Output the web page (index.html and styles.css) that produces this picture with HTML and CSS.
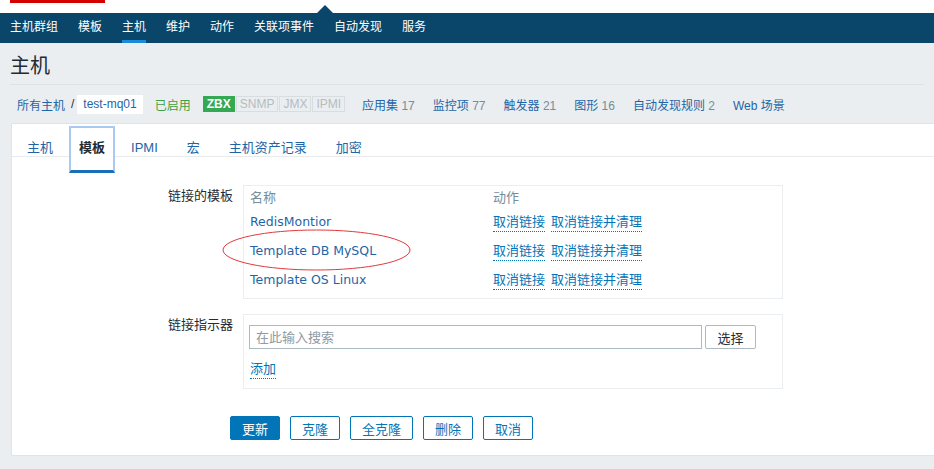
FILE: index.html
```html
<!DOCTYPE html>
<html lang="zh">
<head>
<meta charset="utf-8">
<title>主机</title>
<link rel="stylesheet" href="styles.css">
</head>
<body>
<div class="topstrip">
  <div class="logo-bar"></div>
  <span class="pointer"></span>
</div>
<nav class="nav">
  <a class="nav-item">主机群组</a>
  <a class="nav-item">模板</a>
  <a class="nav-item active">主机</a>
  <a class="nav-item">维护</a>
  <a class="nav-item">动作</a>
  <a class="nav-item">关联项事件</a>
  <a class="nav-item">自动发现</a>
  <a class="nav-item">服务</a>
</nav>
<header class="page-header"><h1>主机</h1></header>
<div class="crumbs">
  <a class="link">所有主机</a>
  <span class="sep">/</span>
  <span class="current">test-mq01</span>
  <span class="status-on">已启用</span>
  <span class="badges">
    <span class="badge on">ZBX</span>
    <span class="badge">SNMP</span>
    <span class="badge">JMX</span>
    <span class="badge">IPMI</span>
  </span>
  <span class="item first"><a class="link">应用集</a> <span class="count">17</span></span>
  <span class="item"><a class="link">监控项</a> <span class="count">77</span></span>
  <span class="item"><a class="link">触发器</a> <span class="count">21</span></span>
  <span class="item"><a class="link">图形</a> <span class="count">16</span></span>
  <span class="item"><a class="link">自动发现规则</a> <span class="count">2</span></span>
  <span class="item"><a class="link">Web 场景</a></span>
</div>
<main class="panel">
  <div class="tabs">
    <a class="tab">主机</a>
    <a class="tab active">模板</a>
    <a class="tab">IPMI</a>
    <a class="tab">宏</a>
    <a class="tab">主机资产记录</a>
    <a class="tab">加密</a>
  </div>
  <div class="form">
    <div class="label">链接的模板</div>
    <div class="box">
      <div class="thead">
        <span class="col-name">名称</span>
        <span class="col-act">动作</span>
      </div>
      <div class="trow">
        <span class="col-name"><a class="tname">RedisMontior</a></span>
        <span class="col-act"><a class="dlink">取消链接</a> <a class="dlink">取消链接并清理</a></span>
      </div>
      <div class="trow">
        <span class="col-name"><a class="tname">Template DB MySQL</a></span>
        <span class="col-act"><a class="dlink">取消链接</a> <a class="dlink">取消链接并清理</a></span>
      </div>
      <div class="trow">
        <span class="col-name"><a class="tname">Template OS Linux</a></span>
        <span class="col-act"><a class="dlink">取消链接</a> <a class="dlink">取消链接并清理</a></span>
      </div>
    </div>
    <div class="label">链接指示器</div>
    <div class="box box2">
      <div class="search-row">
        <input class="search" type="text" placeholder="在此输入搜索">
        <button class="btn-select" type="button">选择</button>
      </div>
      <a class="dlink add">添加</a>
    </div>
  </div>
  <div class="actions">
    <button class="btn primary" type="button">更新</button>
    <button class="btn" type="button">克隆</button>
    <button class="btn" type="button">全克隆</button>
    <button class="btn" type="button">删除</button>
    <button class="btn" type="button">取消</button>
  </div>
  <svg class="mark" width="189" height="42" viewBox="0 0 189 42">
    <ellipse cx="94.5" cy="21" rx="93.5" ry="20" fill="none" stroke="#e4393c" stroke-width="1"/>
  </svg>
</main>
</body>
</html>
```
FILE: styles.css
```css
* { box-sizing: border-box; }
html, body { margin: 0; padding: 0; }
body {
  background: #ebeef0;
  font-family: "Liberation Sans", "Noto Sans CJK SC", sans-serif;
  font-size: 12px;
  color: #1f2c33;
  height: 469px;
  overflow: hidden;
}
a { text-decoration: none; cursor: pointer; }

.topstrip {
  position: relative;
  height: 13px;
  background: #ffffff;
}
.logo-bar {
  width: 95px;
  height: 3px;
  margin-left: 10px;
  background: #d40000;
}
.pointer {
  position: absolute;
  left: 317px;
  bottom: 0;
  width: 0;
  height: 0;
  border-left: 8px solid transparent;
  border-right: 8px solid transparent;
  border-bottom: 8px solid #0a466a;
}

.nav {
  display: flex;
  height: 30px;
  background: #0a466a;
}
.nav-item {
  position: relative;
  padding: 0 10px;
  line-height: 29px;
  color: #ffffff;
  font-size: 12px;
}
.nav-item.active::after {
  content: "";
  position: absolute;
  left: 10px;
  right: 10px;
  bottom: 0;
  height: 3px;
  background: #1a8bd8;
}

.page-header {
  margin: 0 10px;
  padding: 11px 0 6px;
  border-bottom: 1px solid #dde2e5;
}
.page-header h1 {
  margin: 0;
  font-size: 20px;
  line-height: 24px;
  font-weight: normal;
  color: #1f2c33;
}

.crumbs {
  display: flex;
  align-items: center;
  height: 38px;
  padding-left: 17px;
}
.link { color: #1f65a6; }
.sep { margin: 0 3px 0 6px; color: #1f2c33; }
.current {
  background: #ffffff;
  color: #1f65a6;
  padding: 0 6px;
  line-height: 19px;
}
.status-on { color: #429e47; margin-left: 12px; }
.badges { display: flex; gap: 1px; margin-left: 12px; }
.badge {
  font-size: 12px;
  line-height: 14px;
  padding: 0 3px;
  border: 1px solid #d7dde1;
  background: #ebeef0;
  color: #b4bcc2;
}
.badge.on {
  background: #34a853;
  border-color: #34a853;
  color: #ffffff;
  font-weight: bold;
}
.item { margin-left: 18px; }
.item.first { margin-left: 17px; }
.count { color: #768d99; }

.panel {
  position: relative;
  margin-left: 11px;
  background: #ffffff;
  border: 1px solid #dfe4e7;
  border-right: none;
  border-radius: 2px 0 0 2px;
  padding-bottom: 15px;
}
.tabs {
  display: flex;
  align-items: flex-start;
  gap: 9px;
  height: 33px;
  padding-left: 5px;
  border-bottom: 1px solid #e8ebed;
}
.tab {
  padding: 15px 10px 0;
  font-size: 13px;
  line-height: 18px;
  color: #1f65a6;
}
.tab.active {
  position: relative;
  margin: 2px -3px 0;
  height: 47px;
  padding: 11px 8px 0;
  background: #ffffff;
  color: #1f2c33;
  font-weight: bold;
  border: 2px solid #a9c8f2;
  border-bottom: 3px solid #1b6fb6;
}

.form {
  display: grid;
  grid-template-columns: 221px 540px;
  column-gap: 10px;
  row-gap: 15px;
  margin-top: 28px;
}
.label {
  text-align: right;
  font-size: 13px;
  line-height: 18px;
  padding-top: 2px;
  color: #1f2c33;
}
.box {
  border: 1px solid #ebeef0;
  padding: 3px 6px 0;
  font-size: 13px;
}
.thead, .trow { display: flex; line-height: 18px; }
.thead { color: #768d99; margin-bottom: 6px; }
.trow { height: 29px; }
.trow:last-child { height: 27px; }
.col-name { width: 243px; }
.col-act { display: flex; gap: 6px; }
.tname {
  color: #1f65a6;
  font-family: "DejaVu Sans", "Noto Sans CJK SC", sans-serif;
  font-size: 12.5px;
}
.dlink {
  color: #0275b8;
  border-bottom: 1px dotted #0275b8;
  height: 19px;
}

.box2 { padding: 10px 5px 9px; }
.search-row { display: flex; gap: 3px; }
.search {
  width: 453px;
  height: 24px;
  border: 1px solid #acbbc2;
  padding: 0 6px;
  font-family: "Liberation Sans", "Noto Sans CJK SC", sans-serif;
  font-size: 13px;
  color: #1f2c33;
  outline: none;
}
.search::placeholder { color: #8f9aa1; }
.btn-select {
  width: 51px;
  height: 24px;
  border: 1px solid #acbbc2;
  border-radius: 2px;
  background: #ffffff;
  font-family: "Liberation Sans", "Noto Sans CJK SC", sans-serif;
  font-size: 13px;
  color: #1f2c33;
  padding: 0;
}
.add {
  display: inline-block;
  margin-top: 11px;
  margin-left: 1px;
  line-height: 18px;
}

.actions {
  display: flex;
  gap: 10px;
  margin-top: 27px;
  margin-left: 218px;
}
.btn {
  height: 24px;
  padding: 0 11px;
  border: 1px solid #0275b8;
  border-radius: 2px;
  background: #ffffff;
  color: #0275b8;
  font-family: "Liberation Sans", "Noto Sans CJK SC", sans-serif;
  font-size: 13px;
}
.btn.primary { background: #0275b8; color: #ffffff; }

.mark {
  position: absolute;
  left: 210px;
  top: 105px;
}
```
